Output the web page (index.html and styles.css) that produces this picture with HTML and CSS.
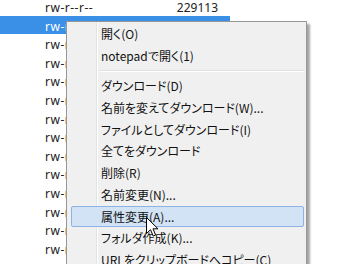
FILE: index.html
```html
<!DOCTYPE html>
<html lang="ja">
<head>
<meta charset="UTF-8">
<title>context menu</title>
<link rel="stylesheet" href="styles.css">
</head>
<body>
<div class="screen">
    <div class="list">
        <div class="row"><span class="perm">rw-r--r--</span><span class="size">229113</span></div>
        <div class="row sel"><span class="perm">rw-r--r--</span></div>
        <div class="row"><span class="perm">rw-r--r--</span></div>
        <div class="row"><span class="perm">rw-r--r--</span></div>
        <div class="row"><span class="perm">rw-r--r--</span></div>
        <div class="row"><span class="perm">rw-r--r--</span></div>
        <div class="row"><span class="perm">rw-r--r--</span></div>
        <div class="row"><span class="perm">rw-r--r--</span></div>
        <div class="row"><span class="perm">rw-r--r--</span></div>
        <div class="row"><span class="perm">rw-r--r--</span></div>
        <div class="row"><span class="perm">rw-r--r--</span></div>
        <div class="row"><span class="perm">rw-r--r--</span></div>
        <div class="row"><span class="perm">rw-r--r--</span></div>
        <div class="row"><span class="perm">rw-r--r--</span></div>
        <div class="row"><span class="perm">rw-r--r--</span></div>
    </div>
    <div class="menu">
        <div class="item">開く(O)</div>
        <div class="item">notepadで開く(1)</div>
        <div class="sep"></div>
        <div class="item">ダウンロード(D)</div>
        <div class="item">名前を変えてダウンロード(W)...</div>
        <div class="item">ファイルとしてダウンロード(I)</div>
        <div class="item">全てをダウンロード</div>
        <div class="item">削除(R)</div>
        <div class="item">名前変更(N)...</div>
        <div class="item hot">属性変更(A)...</div>
        <div class="item">フォルダ作成(K)...</div>
        <div class="item">URLをクリップボードへコピー(C)</div>
    </div>
    <svg class="cursor" width="13" height="20" viewBox="0 0 13 20">
        <path d="M0.5 0.5 L0.5 16.5 L4.5 12.7 L7.2 19 L9.6 18 L7 11.8 L12 11.8 Z" fill="#fff" stroke="#000" stroke-width="1"/>
    </svg>
</div>
</body>
</html>
```
FILE: styles.css
```css
html, body {
    margin: 0;
    padding: 0;
    background: #fff;
}
.screen {
    position: relative;
    width: 347px;
    height: 264px;
    overflow: hidden;
    font-family: "Noto Sans", "Noto Sans CJK JP", sans-serif;
    font-size: 12px;
    color: #222;
}
.list {
    margin-top: -3px;
}
.row {
    display: flex;
    width: 230px;
    height: 18.6px;
    line-height: 18.6px;
    padding-left: 45px;
    box-sizing: border-box;
}
.row .perm {
    width: 120px;
    padding-top: 2px;
    letter-spacing: 0.5px;
}
.row .size {
    width: 53px;
    text-align: right;
    padding-top: 2px;
}
.row.sel {
    background: #3a8fe6;
    color: #fff;
}
.menu {
    position: absolute;
    left: 66px;
    top: 21px;
    width: 241px;
    box-sizing: border-box;
    border: 1px solid #979797;
    background: #f0f0f0;
    padding: 1px 2px 2px 2px;
    box-shadow: 3px 3px 2px rgba(0, 0, 0, 0.35);
    font-family: "Noto Sans CJK JP", sans-serif;
    font-feature-settings: "palt";
    color: #111;
}
.menu::before {
    content: "";
    position: absolute;
    left: 29px;
    top: 0;
    bottom: 0;
    width: 1px;
    background: #e2e3e3;
    border-right: 1px solid #fff;
}
.item {
    position: relative;
    height: 21.7px;
    line-height: 21.7px;
    margin-left: 2px;
    padding-left: 29px;
    border: 1px solid transparent;
    border-width: 0 1px;
    white-space: nowrap;
}
.item.hot {
    background: #d1e3f5;
    border: 1px solid #8db2e3;
    border-radius: 2px;
    height: 19.7px;
    line-height: 19.7px;
}
.sep {
    position: relative;
    height: 9px;
    margin-left: 30px;
}
.sep::after {
    content: "";
    display: block;
    position: relative;
    top: 4px;
    height: 1px;
    background: #e0e0e0;
    border-bottom: 1px solid #fff;
}
.cursor {
    position: absolute;
    left: 146px;
    top: 217px;
}
```
